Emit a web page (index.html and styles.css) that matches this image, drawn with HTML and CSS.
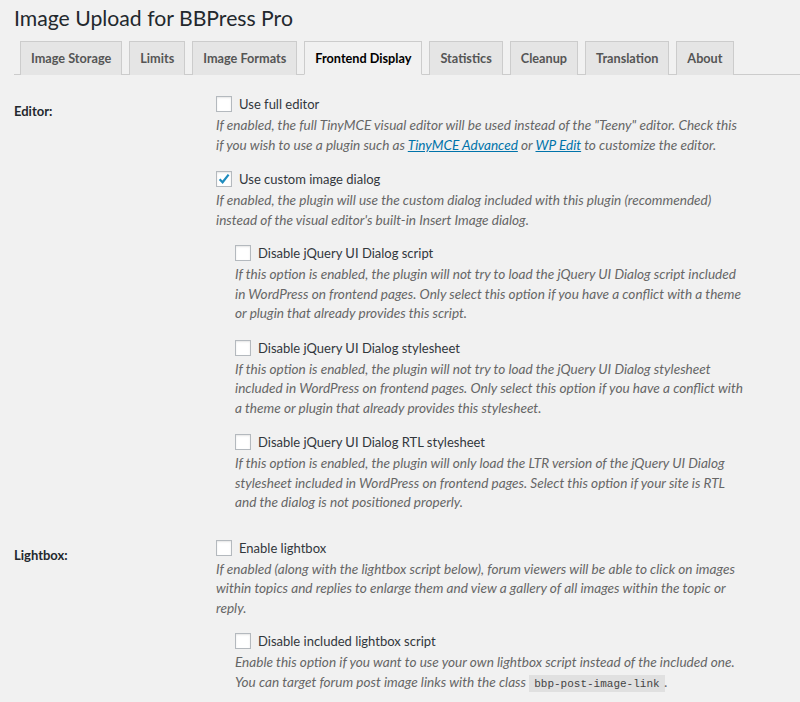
FILE: index.html
```html
<!DOCTYPE html>
<html lang="en">
<head>
    <meta charset="UTF-8">
    <meta name="viewport" content="width=device-width, initial-scale=1.0">
    <title>Image Upload for BBPress Pro</title>
    <link rel="stylesheet" href="styles.css">
</head>
<body>

    <div class="wrap">
        <h1>Image Upload for BBPress Pro</h1>

        <nav class="nav-tabs">
            <a class="nav-tab" href="#">Image Storage</a>
            <a class="nav-tab" href="#">Limits</a>
            <a class="nav-tab" href="#">Image Formats</a>
            <a class="nav-tab nav-tab-active" href="#">Frontend Display</a>
            <a class="nav-tab" href="#">Statistics</a>
            <a class="nav-tab" href="#">Cleanup</a>
            <a class="nav-tab" href="#">Translation</a>
            <a class="nav-tab" href="#">About</a>
        </nav>

        <div class="form-table">
            <div class="form-row">
                <div class="row-label">Editor:</div>
                <div class="row-field">
                    <div class="option">
                        <label class="check"><span class="box"></span>Use full editor</label>
                        <p class="description">If enabled, the full TinyMCE visual editor will be used instead of the "Teeny" editor. Check this<br>if you wish to use a plugin such as <a href="#">TinyMCE Advanced</a> or <a href="#">WP Edit</a> to customize the editor.</p>
                    </div>
                    <div class="option">
                        <label class="check"><span class="box checked"><svg viewBox="0 0 16 16" width="16" height="16"><path d="M3.6 8.2 L6.6 11.3 L12.6 3.6" fill="none" stroke="#1e8cbe" stroke-width="2.2"/></svg></span>Use custom image dialog</label>
                        <p class="description">If enabled, the plugin will use the custom dialog included with this plugin (recommended)<br>instead of the visual editor's built-in Insert Image dialog.</p>

                        <div class="sub-options">
                            <div class="option">
                                <label class="check"><span class="box"></span>Disable jQuery UI Dialog script</label>
                                <p class="description">If this option is enabled, the plugin will not try to load the jQuery UI Dialog script included<br>in WordPress on frontend pages. Only select this option if you have a conflict with a theme<br>or plugin that already provides this script.</p>
                            </div>
                            <div class="option">
                                <label class="check"><span class="box"></span>Disable jQuery UI Dialog stylesheet</label>
                                <p class="description">If this option is enabled, the plugin will not try to load the jQuery UI Dialog stylesheet<br>included in WordPress on frontend pages. Only select this option if you have a conflict with<br>a theme or plugin that already provides this stylesheet.</p>
                            </div>
                            <div class="option">
                                <label class="check"><span class="box"></span>Disable jQuery UI Dialog RTL stylesheet</label>
                                <p class="description">If this option is enabled, the plugin will only load the LTR version of the jQuery UI Dialog<br>stylesheet included in WordPress on frontend pages. Select this option if your site is RTL<br>and the dialog is not positioned properly.</p>
                            </div>
                        </div>
                    </div>
                </div>
            </div>

            <div class="form-row">
                <div class="row-label">Lightbox:</div>
                <div class="row-field">
                    <div class="option">
                        <label class="check"><span class="box"></span>Enable lightbox</label>
                        <p class="description">If enabled (along with the lightbox script below), forum viewers will be able to click on images<br>within topics and replies to enlarge them and view a gallery of all images within the topic or<br>reply.</p>

                        <div class="sub-options">
                            <div class="option">
                                <label class="check"><span class="box"></span>Disable included lightbox script</label>
                                <p class="description">Enable this option if you want to use your own lightbox script instead of the included one.<br>You can target forum post image links with the class <code>bbp-post-image-link</code>.</p>
                            </div>
                        </div>
                    </div>
                </div>
            </div>
        </div>
    </div>

</body>
</html>
```

FILE: styles.css
```css
body { margin: 0; background-color: #f1f1f1; color: #23282d; font-family: Lato, "Open Sans", sans-serif; font-size: 13px; }
.wrap { padding-left: 14px; }
h1 { margin: 0; padding: 3px 0 8px; font-size: 21.2px; font-weight: 400; line-height: 30px; color: #23282d; }

/* tabs */
.nav-tabs { display: flex; gap: 7px; padding-left: 6px; border-bottom: 1px solid #ccc; }
.nav-tab { display: block; padding: 4px 10px; margin-bottom: -1px; border: 1px solid #ccc; border-bottom: none; background-color: #e5e5e5; color: #555; font-size: 12.7px; font-weight: 700; line-height: 24px; text-decoration: none; }
.nav-tab-active { background-color: #f1f1f1; color: #000; border-bottom: 1px solid #f1f1f1; }

/* settings rows */
.form-table { padding-top: 21px; }
.form-row { display: grid; grid-template-columns: 202px 560px; padding-bottom: 27px; }
.row-label { padding-top: 6px; font-size: 13px; font-weight: 700; line-height: 18px; }
.option + .option { margin-top: 16px; }
.check { display: flex; align-items: center; gap: 7px; font-size: 13px; line-height: 16px; color: #32373c; }
.box { width: 16px; height: 16px; box-sizing: border-box; border: 1px solid #b4b9be; background-color: #fff; box-shadow: inset 0 1px 2px rgba(0, 0, 0, 0.1); }
.box svg { display: block; margin: -1px; }
.description { margin: 4px 0 0; font-size: 13.6px; font-style: italic; line-height: 19.5px; color: #666; }
.description a { color: #0073aa; }
.sub-options { margin-top: 15px; padding-left: 19px; }
code { padding: 3px 5px 2px; background-color: rgba(0, 0, 0, 0.07); font-family: "Liberation Mono", monospace; font-size: 11px; font-style: normal; color: #444; }
```
